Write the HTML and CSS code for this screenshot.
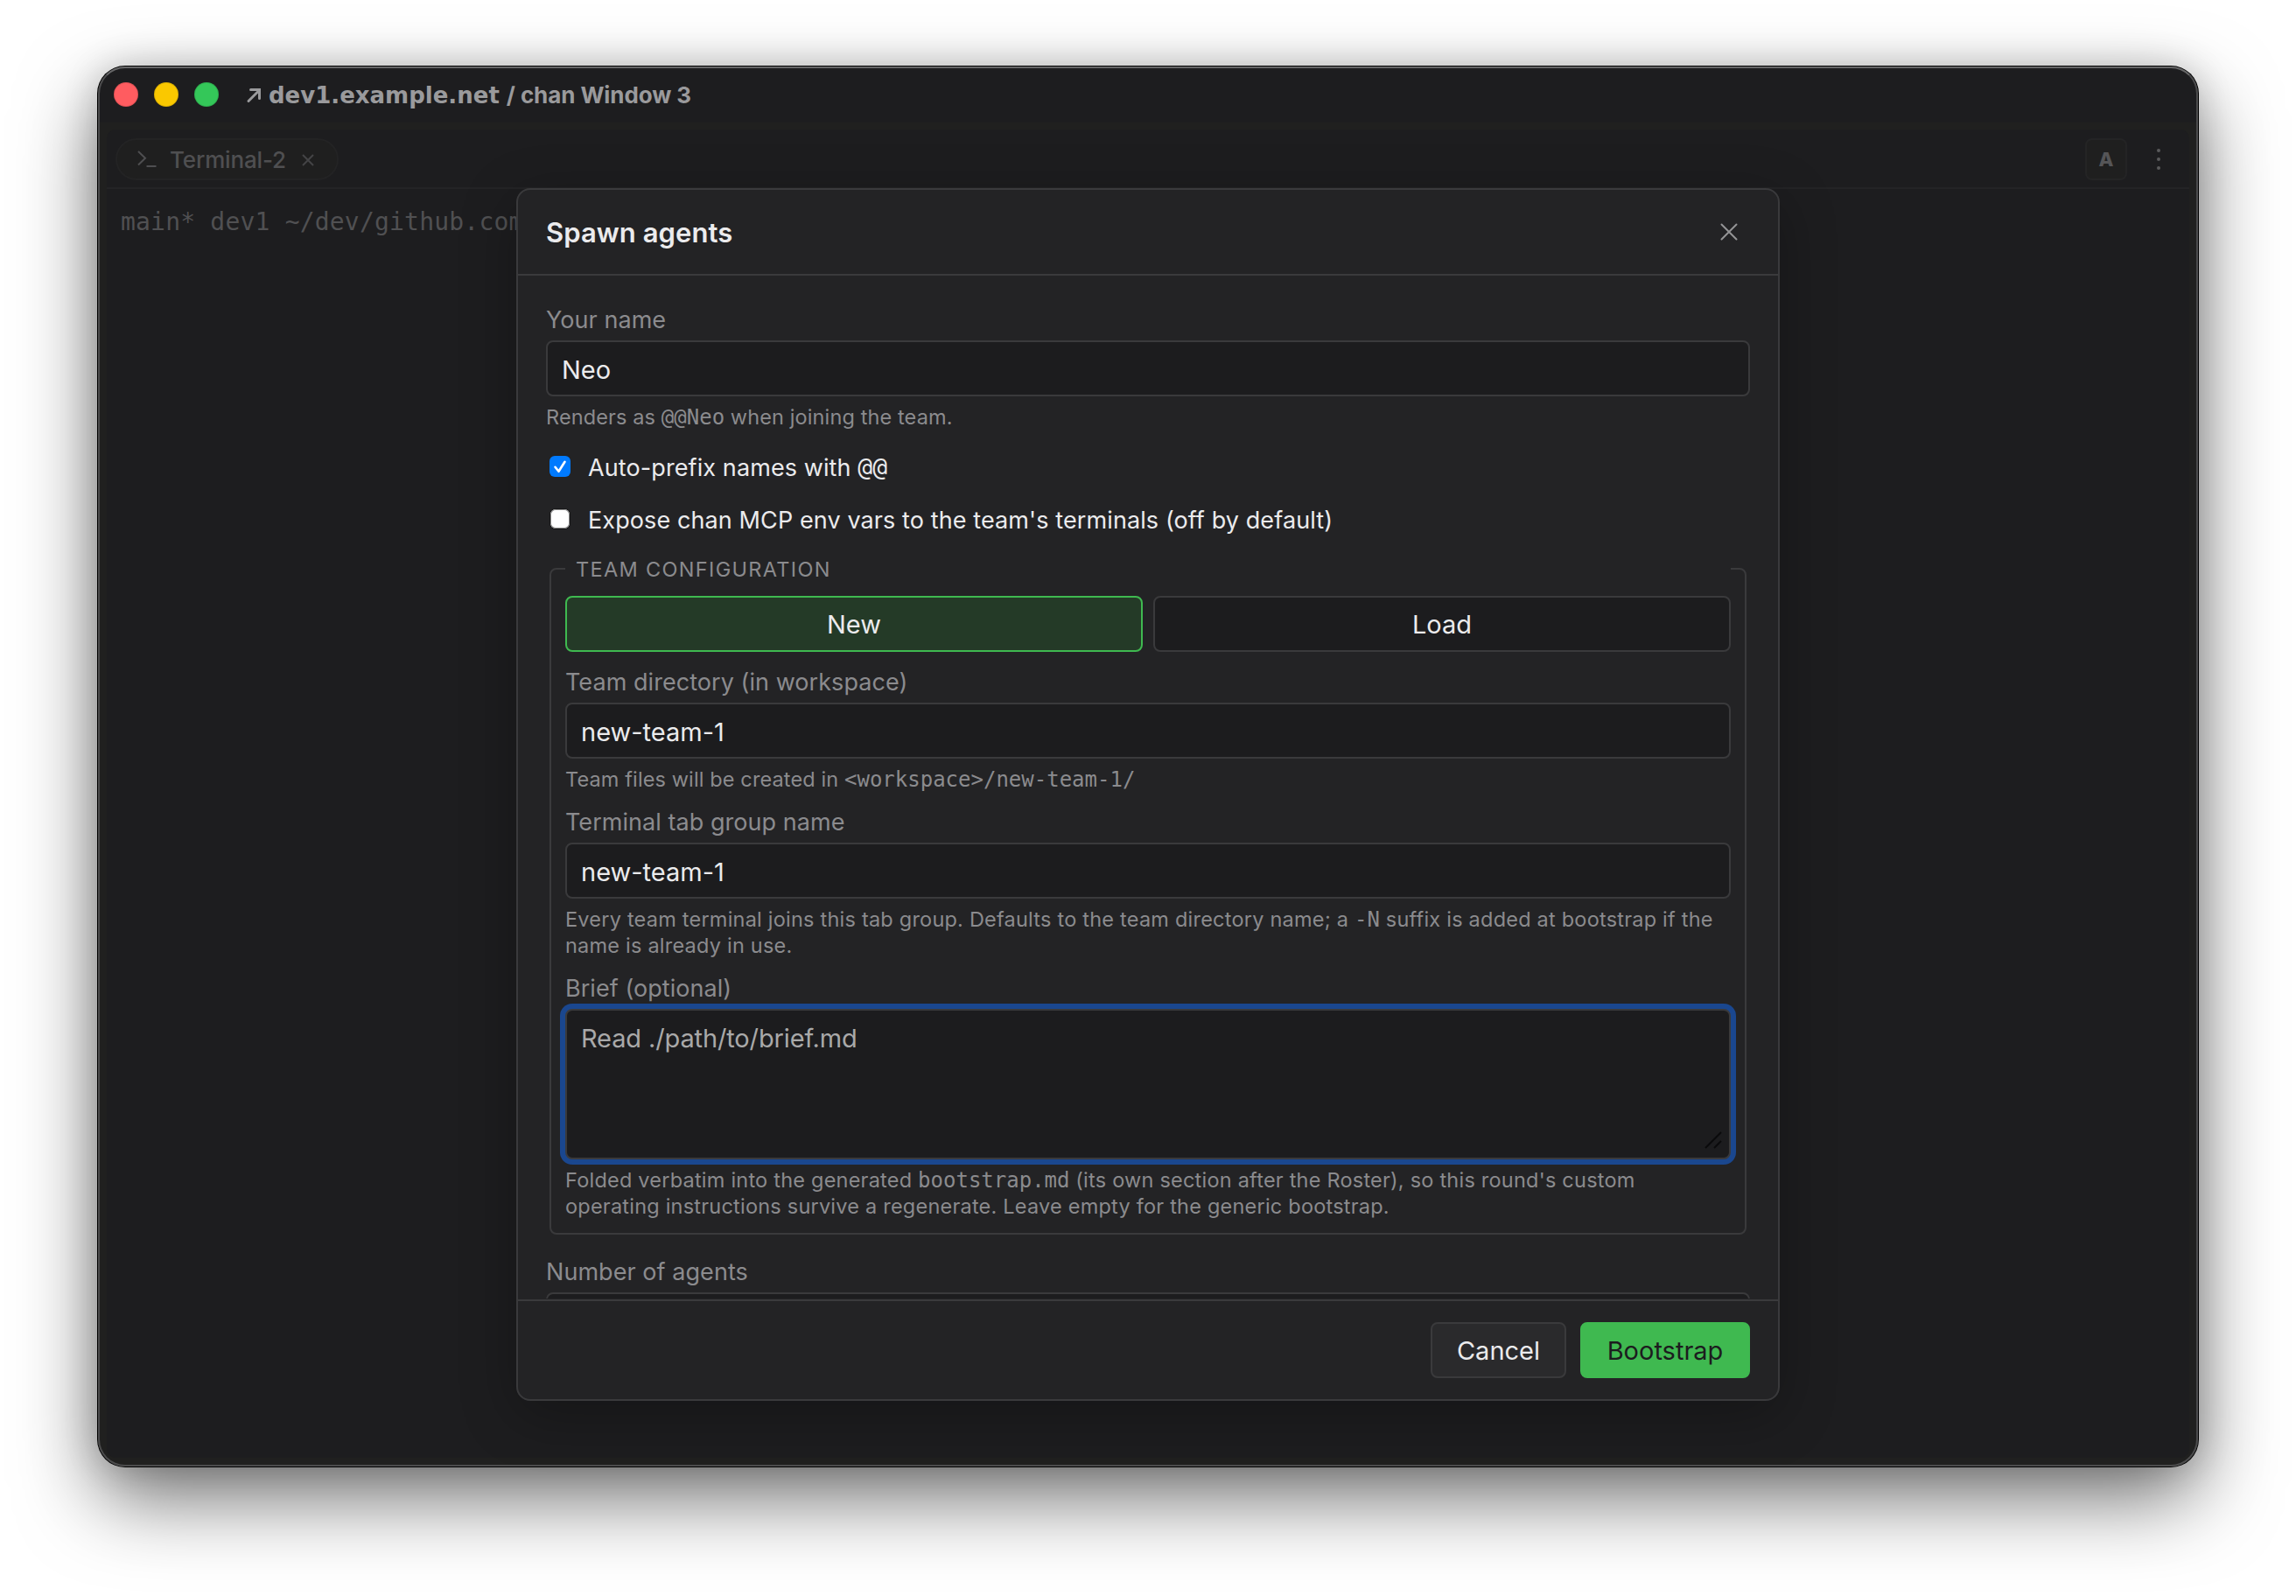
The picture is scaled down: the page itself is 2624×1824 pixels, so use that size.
FILE: index.html
```html
<!DOCTYPE html>
<html lang="en">
<head>
<meta charset="utf-8">
<title>chan Window 3</title>
<link rel="stylesheet" href="styles.css">
</head>
<body>
<div class="window">
  <header class="titlebar">
    <div class="lights"><span class="light close"></span><span class="light minimize"></span><span class="light zoom"></span></div>
    <div class="window-title">
      <svg class="arrow" viewBox="0 0 18 18"><path d="M3 15.5 15 3.5M5.5 2.5H15.5V12.5" fill="none" stroke="currentColor" stroke-width="3" stroke-linecap="round"/></svg>
      <span class="host">dev1.example.net</span><span class="name">/ chan Window 3</span>
    </div>
  </header>
  <main class="workspace">
    <section class="pane">
      <nav class="tabs">
        <div class="tab">
          <svg class="prompt" viewBox="0 0 24 24"><path d="M2 3l8 7.8L2 18.5M11.5 20h11" fill="none" stroke="currentColor" stroke-width="2"/></svg>
          <span class="tab-label">Terminal-2</span>
          <svg class="tab-close" viewBox="0 0 14 14"><path d="M1 1l12 12M13 1L1 13" stroke="currentColor" stroke-width="2"/></svg>
        </div>
        <div class="tab-actions">
          <span class="badge">A</span>
          <svg class="dots" viewBox="0 0 8 24"><circle cx="4" cy="2" r="2"/><circle cx="4" cy="12" r="2"/><circle cx="4" cy="22" r="2"/></svg>
        </div>
      </nav>
      <div class="terminal">main* dev1 ~/dev/github.com</div>
    </section>
    <div class="modal" role="dialog">
      <header class="modal-head">
        <h1>Spawn agents</h1>
        <svg class="modal-close" viewBox="0 0 20 20"><path d="M1.5 1.5l17 17M18.5 1.5l-17 17" stroke="currentColor" stroke-width="2" stroke-linecap="round"/></svg>
      </header>
      <div class="modal-body">
        <div class="field">
          <label>Your name</label>
          <input class="control" value="Neo">
          <p class="hint">Renders as <code>@@Neo</code> when joining the team.</p>
        </div>
        <label class="check"><span class="box checked"><svg viewBox="0 0 24 24"><path d="M6.5 12.8l4 5 7-11" fill="none" stroke="#fff" stroke-width="2.6" stroke-linecap="round" stroke-linejoin="round"/></svg></span><span class="check-label">Auto-prefix names with <code>@@</code></span></label>
        <label class="check"><span class="box"></span><span class="check-label">Expose chan MCP env vars to the team's terminals (off by default)</span></label>
        <fieldset class="group">
          <legend>TEAM CONFIGURATION</legend>
          <div class="segmented"><button class="segment active" type="button">New</button><button class="segment" type="button">Load</button></div>
          <div class="field">
            <label>Team directory (in workspace)</label>
            <input class="control" value="new-team-1">
            <p class="hint">Team files will be created in <code>&lt;workspace&gt;/new-team-1/</code></p>
          </div>
          <div class="field">
            <label>Terminal tab group name</label>
            <input class="control" value="new-team-1">
            <p class="hint long">Every team terminal joins this tab group. Defaults to the team directory name; a <code>-N</code> suffix is added at bootstrap if the<br>name is already in use.</p>
          </div>
          <div class="field">
            <label>Brief (optional)</label>
            <div class="area">
              <textarea class="control brief" placeholder="Read ./path/to/brief.md"></textarea>
              <svg class="grip" viewBox="0 0 20 20"><path d="M1 19L19 1M11 19l8-8" stroke="#0a0a0b" stroke-width="2"/></svg>
            </div>
            <p class="hint long">Folded verbatim into the generated <code>bootstrap.md</code> (its own section after the Roster), so this round's custom<br>operating instructions survive a regenerate. Leave empty for the generic bootstrap.</p>
          </div>
        </fieldset>
        <div class="field">
          <label>Number of agents</label>
          <input class="control">
        </div>
      </div>
      <footer class="modal-foot"><button class="btn" type="button">Cancel</button><button class="btn primary" type="button">Bootstrap</button></footer>
    </div>
  </main>
</div>
</body>
</html>
```
FILE: styles.css
```css
* { box-sizing: border-box; }

body {
  margin: 0;
  height: 1824px;
  overflow: hidden;
  background: #fff;
  font-family: Inter, "Liberation Sans", sans-serif;
  font-size: 27px;
  color: #ebebed;
}

code, .terminal { font-family: "DejaVu Sans Mono", "Liberation Mono", monospace; }

.window {
  position: relative;
  display: flex;
  flex-direction: column;
  width: 2400px;
  height: 1600px;
  margin: 76px 0 0 112px;
  border-radius: 31px;
  background: #1d1d1f;
  box-shadow: 0 0 0 1px #000, 0 36px 90px rgba(0, 0, 0, .56), 0 0 40px rgba(0, 0, 0, .16);
}

/* Light rim that macOS draws just inside the window edge */
.window::after {
  content: "";
  position: absolute;
  inset: 0;
  border: 2px solid #4c4c4d;
  border-top-color: #666667;
  border-radius: 31px;
  pointer-events: none;
}

.titlebar {
  display: flex;
  align-items: center;
  height: 64px;
  padding-left: 18px;
  color: #9a9a9c;
}

.lights { display: flex; gap: 18px; }
.light { width: 28px; height: 28px; border-radius: 50%; border: 1px solid rgba(0, 0, 0, .12); }
.light.close { background: #ff5c60; }
.light.minimize { background: #fac800; }
.light.zoom { background: #34c759; }

.window-title { display: flex; align-items: center; margin-left: 31px; padding-top: 2px; font-weight: 700; line-height: 32px; }
.arrow { width: 18px; height: 18px; margin-right: 8px; }
.host { font: 700 26px/32px "DejaVu Sans", sans-serif; }
.name { margin-left: 8px; font-size: 26px; letter-spacing: -.08px; }

.workspace {
  position: relative;
  flex: 1;
  display: flex;
  padding: 8px 10px 10px;
  background: #20201f;
  border-radius: 0 0 31px 31px;
}

.pane { flex: 1; background: #1d1d1f; border-radius: 10px; }

.tabs {
  display: flex;
  align-items: center;
  justify-content: space-between;
  height: 68px;
  padding: 2px 31px 0 10px;
  border-bottom: 2px solid #242426;
}

.tab {
  display: flex;
  align-items: center;
  width: 255px;
  height: 48px;
  padding-left: 22px;
  border: 2px solid #232324;
  border-radius: 24px;
  background: #1f1f1f;
  color: #4f4f51;
}

.prompt { width: 24px; height: 24px; margin-right: 14px; }
.tab-label { padding-top: 1px; font-size: 26px; font-weight: 500; letter-spacing: -.15px; }
.tab-close { width: 14px; height: 14px; margin: 2px 0 0 18px; color: #444446; }

.tab-actions { display: flex; align-items: center; gap: 32px; }

.badge {
  width: 48px;
  height: 48px;
  border: 2px solid #242425;
  border-radius: 8px;
  background: #1f1f1f;
  color: #555557;
  font-size: 22px;
  font-weight: 800;
  line-height: 45px;
  text-align: center;
}

.dots { width: 8px; height: 24px; fill: #5a5a5c; }
.terminal { padding: 20px 16px; font-size: 28px; line-height: 36px; letter-spacing: .2px; color: #505052; }

.modal {
  position: absolute;
  left: 478px;
  top: 75px;
  display: flex;
  flex-direction: column;
  width: 1444px;
  height: 1386px;
  border: 2px solid #3a3a3c;
  border-radius: 16px;
  background: #232325;
  box-shadow: 0 16px 64px rgba(0, 0, 0, .28);
}

.modal-head {
  display: flex;
  align-items: center;
  justify-content: space-between;
  flex: none;
  height: 98px;
  padding: 0 46px 0 32px;
  border-bottom: 2px solid #3a3a3c;
}

h1 { margin: 0; padding-top: 1px; font-size: 31px; font-weight: 600; line-height: 40px; letter-spacing: .05px; }
.modal-close { width: 20px; height: 20px; margin-bottom: 1px; color: #949496; }

.modal-body {
  display: flex;
  flex-direction: column;
  gap: 24px;
  flex: 1;
  min-height: 0;
  margin-bottom: 1px;
  padding: 32px 32px 0;
  overflow: hidden;
}

.field { flex: none; }
.field > label { display: block; margin-bottom: 5px; padding-top: 1px; line-height: 36px; letter-spacing: .05px; color: #8b8b8e; }

.control {
  display: block;
  width: 100%;
  height: 64px;
  padding: 2px 16px 0;
  border: 2px solid #3a3a3c;
  border-radius: 8px;
  outline: none;
  background: #1c1c1e;
  color: #ebebed;
  font: 29px/36px Inter, "Liberation Sans", sans-serif;
}

.hint { margin: 9px 0 -1px; font-size: 23.5px; line-height: 30px; letter-spacing: .12px; color: #8b8b8e; white-space: nowrap; }
.hint.long { letter-spacing: .22px; }
.hint code { font-size: 24px; line-height: 1; letter-spacing: 0; }

.check { display: flex; align-items: center; flex: none; height: 36px; padding-left: 4px; letter-spacing: .1px; }
.check-label { padding-top: 2px; }
.check code { font-size: 28px; line-height: 1; }
.box { width: 22px; height: 22px; margin: 0 21px 0 1px; border-radius: 6px; background: #fff; box-shadow: inset 0 0 0 1px #8a8a8a, 0 0 0 1px #161617; }
.box.checked { width: 24px; height: 24px; margin: 0 20px 0 0; background: #007aff; box-shadow: none; }
.box svg { display: block; }

.group {
  flex: none;
  display: block;
  min-width: 0;
  margin: 0 4px;
  padding: 16px;
  border: 2px solid #3a3a3c;
  border-radius: 8px;
}

.group legend { width: 100%; height: 30px; padding: 1px 12px 0; font-size: 23.5px; line-height: 30px; letter-spacing: 1.33px; color: #8b8b8e; }
.group .field { margin-top: 16px; }

.segmented { display: grid; grid-template-columns: 1fr 1fr; gap: 12px; }

.segment, .btn {
  height: 64px;
  padding: 2px 0 0;
  border: 2px solid #3a3a3c;
  border-radius: 8px;
  background: #1c1c1e;
  color: #ebebed;
  font: 29px/36px Inter, "Liberation Sans", sans-serif;
}

.segment.active { border-color: #3fb950; background: #243a27; }

.area { position: relative; }
.brief { height: 172px; padding-top: 14px; resize: none; box-shadow: 0 0 0 6px #1a478f; }
.brief::placeholder { color: #a9a9a9; letter-spacing: -.13px; }
.grip { position: absolute; right: 10px; bottom: 12px; width: 20px; height: 20px; }

.modal-foot {
  display: flex;
  justify-content: flex-end;
  gap: 16px;
  flex: none;
  height: 114px;
  padding: 24px 32px;
  border-top: 2px solid #3a3a3c;
}

.btn { width: 155px; background: #2a2a2c; }
.btn.primary { width: 194px; border-color: #3fb950; background: #3fb950; color: #1c1c1e; }
```
